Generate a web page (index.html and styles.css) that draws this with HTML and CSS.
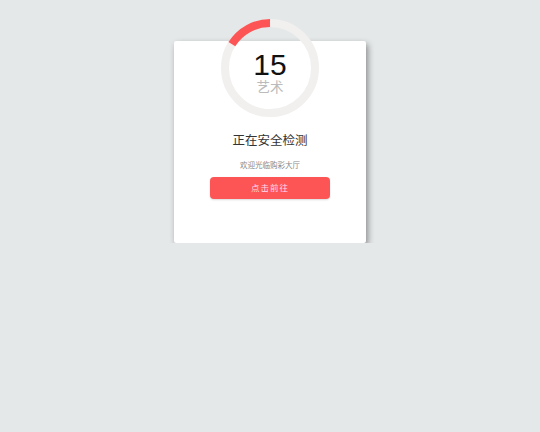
FILE: index.html
```html
<!DOCTYPE html>
<html lang="zh-CN">
  <head>
    <meta charset="UTF-8" />
    <meta name="viewport" content="width=device-width, initial-scale=1.0" />
    <title>正在安全检测</title>
    <link rel="stylesheet" href="styles.css">
  </head>
  <body>
    <div class="card">
      <div class="ring">
        <svg class="ring-svg" width="98" height="98" viewBox="0 0 98 98">
          <circle cx="49" cy="49" r="45" fill="none" stroke="#f1f0ef" stroke-width="8" />
          <circle cx="49" cy="49" r="45" fill="none" stroke="#fd5555" stroke-width="8"
            stroke-dasharray="45.5 300" transform="rotate(-148 49 49)" />
        </svg>
        <div class="count">15</div>
        <div class="count-label">艺术</div>
      </div>
      <h2 class="title">正在安全检测</h2>
      <p class="subtitle">欢迎光临购彩大厅</p>
      <a class="go-btn" href="#">点击前往</a>
    </div>
  </body>
</html>
```

FILE: styles.css
```css
body {
  margin: 0;
  background-color: #e5e8e9;
  font-family: "Liberation Sans", Arial, "Noto Sans CJK SC", sans-serif;
}

.card {
  display: flow-root;
  width: 192px;
  height: 202px;
  margin: 41px auto 0;
  background-color: #fff;
  border-radius: 2px;
  box-shadow: 2px 3px 6px rgba(0, 0, 0, 0.4);
  text-align: center;
}

.ring {
  position: relative;
  width: 98px;
  height: 98px;
  margin: -22px auto 0;
  padding-top: 31px;
  box-sizing: border-box;
}
.ring-svg {
  position: absolute;
  left: 0;
  top: 0;
}
.count {
  position: relative;
  font-size: 30px;
  line-height: 30px;
  color: #111;
}
.count-label {
  position: relative;
  font-size: 13.5px;
  line-height: 15px;
  color: #bbb;
}

.title {
  margin: 15px 0 0;
  font-size: 12.5px;
  line-height: 18px;
  font-weight: normal;
  color: #333;
}
.subtitle {
  margin: 10px 0 0;
  font-size: 7.5px;
  line-height: 12px;
  color: #888;
}
.go-btn {
  display: block;
  width: 120px;
  height: 22px;
  margin: 5px auto 0;
  line-height: 22px;
  border-radius: 4px;
  background-color: #fd5555;
  box-shadow: 0 1px 2px rgba(0, 0, 0, 0.15);
  color: #fde;
  font-size: 8.5px;
  letter-spacing: 1px;
  text-decoration: none;
}
```
